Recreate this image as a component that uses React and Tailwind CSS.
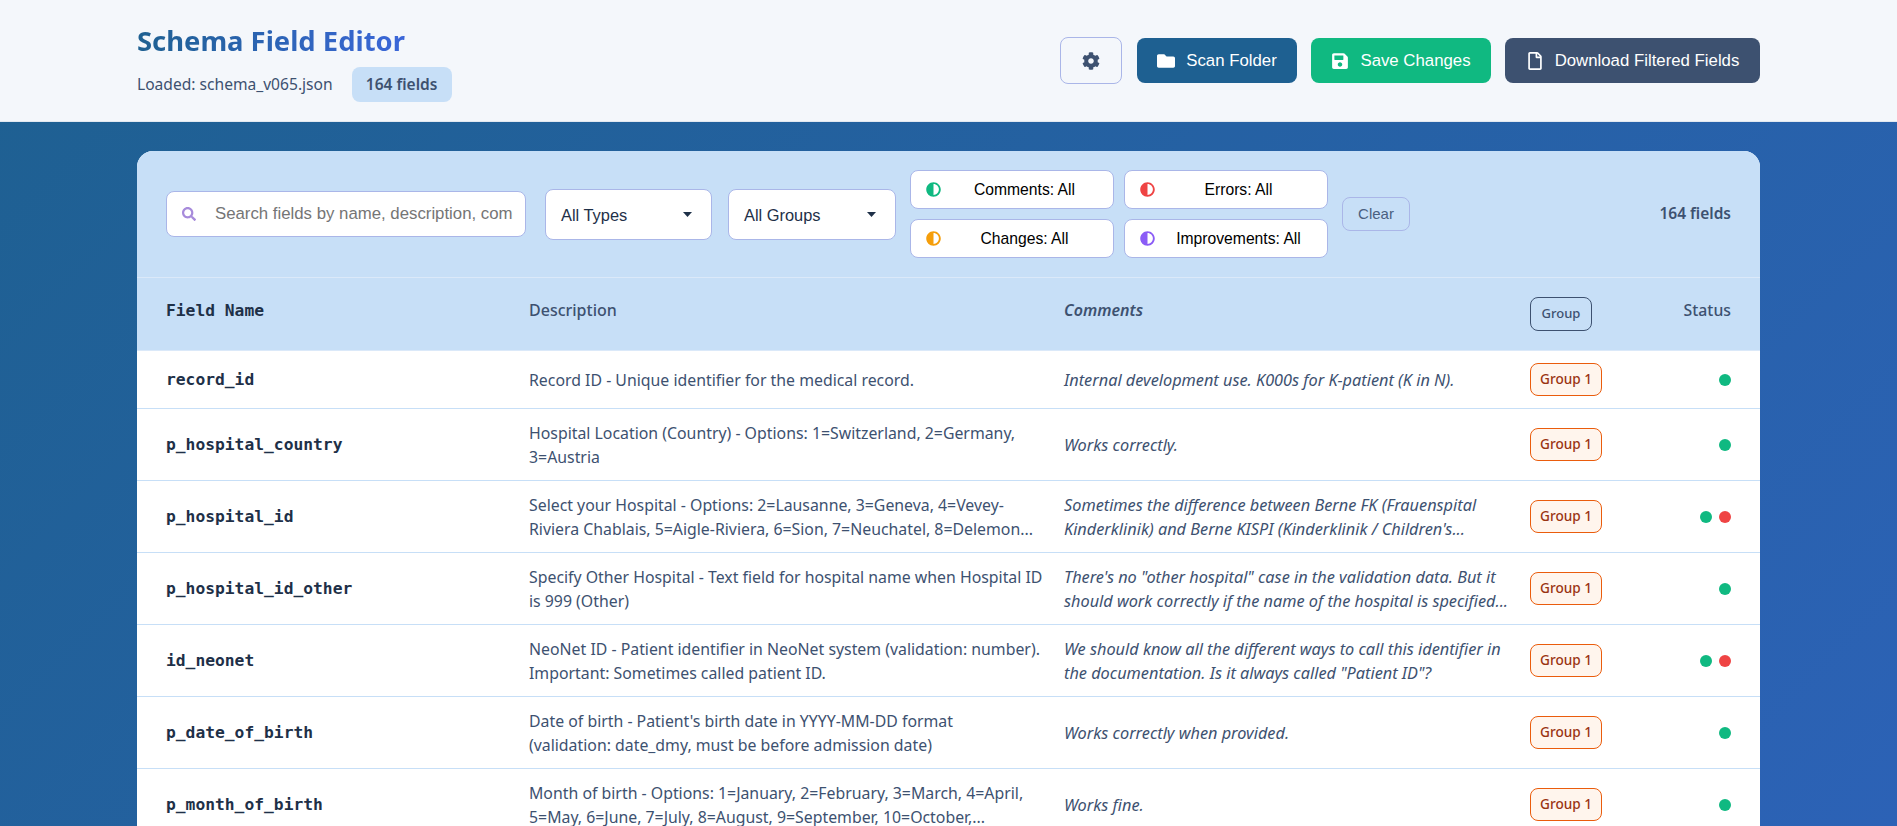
import React from "react";
import { FaCog, FaFolder, FaSave, FaRegFile, FaSearch, FaAdjust } from "react-icons/fa";

const rows = [
  ["record_id", ["Record ID - Unique identifier for the medical record."], ["Internal development use. K000s for K-patient (K in N)."], 1, 58],
  ["p_hospital_country", ["Hospital Location (Country) - Options: 1=Switzerland, 2=Germany,", "3=Austria"], ["Works correctly."], 1, 72],
  ["p_hospital_id", ["Select your Hospital - Options: 2=Lausanne, 3=Geneva, 4=Vevey-", "Riviera Chablais, 5=Aigle-Riviera, 6=Sion, 7=Neuchatel, 8=Delemon..."], ["Sometimes the difference between Berne FK (Frauenspital", "Kinderklinik) and Berne KISPI (Kinderklinik / Children's..."], 2, 72],
  ["p_hospital_id_other", ["Specify Other Hospital - Text field for hospital name when Hospital ID", "is 999 (Other)"], ["There's no \"other hospital\" case in the validation data. But it", "should work correctly if the name of the hospital is specified..."], 1, 72],
  ["id_neonet", ["NeoNet ID - Patient identifier in NeoNet system (validation: number).", "Important: Sometimes called patient ID."], ["We should know all the different ways to call this identifier in", "the documentation. Is it always called \"Patient ID\"?"], 2, 72],
  ["p_date_of_birth", ["Date of birth - Patient's birth date in YYYY-MM-DD format", "(validation: date_dmy, must be before admission date)"], ["Works correctly when provided."], 1, 72],
  ["p_month_of_birth", ["Month of birth - Options: 1=January, 2=February, 3=March, 4=April,", "5=May, 6=June, 7=July, 8=August, 9=September, 10=October,..."], ["Works fine."], 1, 72],
];

function Chip({ color, label }) {
  return (
    <button className="flex h-[39px] w-[204px] items-center rounded-lg border border-[#aab6e8] bg-white px-[15px] font-['Liberation_Sans',sans-serif] text-[15.7px] text-black">
      <FaAdjust className={`h-[15px] w-[15px] shrink-0 ${color}`} />
      <span className="flex-1 pl-[10px] text-center">{label}</span>
    </button>
  );
}

function Select({ label, className }) {
  return (
    <button className={`flex h-[51px] items-center justify-between rounded-lg border border-[#aab6e8] bg-white pl-[15px] pr-[19px] font-['Liberation_Sans',sans-serif] text-[16.4px] text-[#1e3048] ${className}`}>
      <span className="pt-[2px]">{label}</span>
      <svg width="9" height="5" viewBox="0 0 9 5"><path d="M0 0h9L4.5 5z" fill="#1e3048" /></svg>
    </button>
  );
}

function Lines({ lines }) {
  return lines.map((l, i) => <div key={i} className="whitespace-nowrap">{l}</div>);
}

function Row({ r }) {
  const [name, desc, comment, dots, h] = r;
  return (
    <div className={`grid grid-cols-[376px_535px_466px_1fr] items-center border-b border-[#c7dff7] bg-white ${h === 58 ? "h-[58px]" : "h-[72px]"}`}>
      <div className="pl-[29px] pt-[1px] font-['DejaVu_Sans_Mono',monospace] text-[16.3px] font-bold text-[#1e3048]">{name}</div>
      <div className="pl-4 text-[15.85px] leading-[24px] text-[#3d5170]"><Lines lines={desc} /></div>
      <div className="pl-4 text-[16.3px] leading-[24px] italic text-[#3d5170]"><Lines lines={comment} /></div>
      <div className="flex items-center justify-between pl-4 pr-[29px]">
        <span className="flex h-[33px] w-[72px] items-center justify-center rounded-lg border border-[#ea5c0c] bg-[#fff5ed] text-[13.6px] font-medium text-[#9a3412]">Group 1</span>
        <span className="flex gap-[7px]">
          <i className="h-3 w-3 rounded-full bg-[#10b981]" />
          {dots === 2 && <i className="h-3 w-3 rounded-full bg-[#ef4444]" />}
        </span>
      </div>
    </div>
  );
}

export default function App() {
  const btn = "flex h-[45px] items-center justify-center gap-[11px] rounded-lg font-['Liberation_Sans',sans-serif] text-[16.8px] text-white";
  return (
    <div className="h-[826px] overflow-hidden bg-linear-[135deg] from-[#1e6091] to-[#2c62b6] font-['Noto_Sans',sans-serif]">
      <header className="h-[122px] border-b border-[#e2e8f0] bg-[#f4f7fb] px-[137px]">
        <div className="flex h-full items-center justify-between">
          <div className="pt-[2px]">
            <h1 className="w-fit bg-gradient-to-r from-[#1e6091] to-[#3b66d9] bg-clip-text text-[27.4px] leading-[40px] font-bold text-transparent">Schema Field Editor</h1>
            <div className="mt-[6px] flex items-center gap-[19px]">
              <span className="text-[15.6px] text-[#3d5170]">Loaded: schema_v065.json</span>
              <span className="flex h-[35px] w-[100px] items-center justify-center rounded-lg bg-[#c7dff7] text-[15.5px] font-semibold text-[#3d5170]">164 fields</span>
            </div>
          </div>
          <div className="flex items-center gap-[14px]">
            <button className="mr-[1px] flex h-[47px] w-[62px] items-center justify-center rounded-lg border border-[#aab6e8] bg-transparent text-[#3d5170]"><FaCog className="h-[18px] w-[18px]" /></button>
            <button className={`${btn} w-[160px] bg-[#1e6091]`}><FaFolder className="h-[18px] w-[18px]" />Scan Folder</button>
            <button className={`${btn} w-[180px] bg-[#10b981]`}><FaSave className="h-[18px] w-[18px]" />Save Changes</button>
            <button className={`${btn} w-[255px] bg-[#3d5170]`}><FaRegFile className="h-[18px] w-[18px]" />Download Filtered Fields</button>
          </div>
        </div>
      </header>
      <main className="px-[137px] pt-[29px]">
        <div className="overflow-hidden rounded-t-2xl bg-white">
          <div className="flex h-[127px] items-center border-b border-[#dbe9f9] bg-[#c7dff7] px-[29px]">
            <div className="flex h-[46px] w-[360px] items-center rounded-lg border border-[#aab6e8] bg-white pl-[15px] pr-3">
              <FaSearch className="h-[14px] w-[14px] shrink-0 text-[#a78bdb]" />
              <input readOnly placeholder="Search fields by name, description, comments..." className="ml-[19px] w-full min-w-0 bg-transparent font-['Liberation_Sans',sans-serif] text-[16.8px] outline-none placeholder:text-[#757575]" />
            </div>
            <Select label="All Types" className="ml-[19px] w-[167px]" />
            <Select label="All Groups" className="ml-[16px] w-[168px]" />
            <div className="ml-[14px] grid grid-cols-[204px_204px] gap-x-[10px] gap-y-[10px]">
              <Chip color="text-[#10b981]" label="Comments: All" />
              <Chip color="text-[#ef4444]" label="Errors: All" />
              <Chip color="text-[#f59e0b]" label="Changes: All" />
              <Chip color="text-[#8b5cf6]" label="Improvements: All" />
            </div>
            <button className="ml-[14px] h-[34px] w-[68px] rounded-lg border border-[#aab6e8] font-['Liberation_Sans',sans-serif] text-[15px] text-[#4a6080]">Clear</button>
            <span className="ml-auto text-[15.5px] font-semibold text-[#3d5170]">164 fields</span>
          </div>
          <div className="grid h-[73px] grid-cols-[376px_535px_466px_1fr] items-center border-b border-[#dbe9f9] bg-[#c7dff7] text-[16px] font-medium text-[#3d5170]">
            <div className="pb-[6px] pl-[29px] font-['DejaVu_Sans_Mono',monospace] text-[16.3px] font-bold text-[#1e3048]">Field Name</div>
            <div className="pb-[8px] pl-4">Description</div>
            <div className="pb-[8px] pl-4 font-semibold italic">Comments</div>
            <div className="flex items-center justify-between pl-4 pr-[29px]">
              <span className="flex h-[34px] w-[62px] items-center justify-center rounded-lg border border-[#3d5170] text-[13px]">Group</span>
              <span className="pb-[6px] text-[15.8px]">Status</span>
            </div>
          </div>
          {rows.map((r) => <Row key={r[0]} r={r} />)}
        </div>
      </main>
    </div>
  );
}
